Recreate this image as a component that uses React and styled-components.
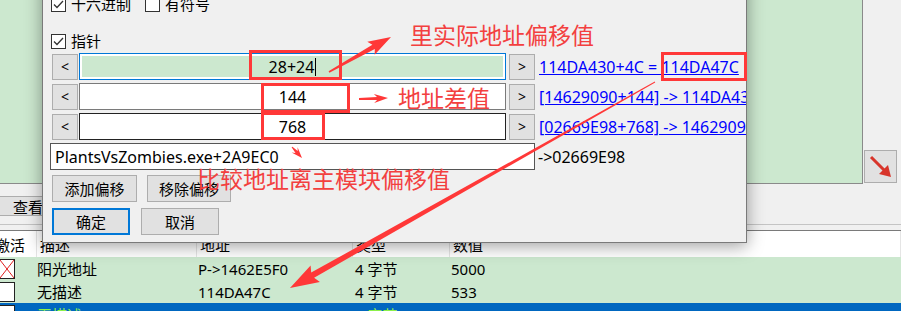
import React from 'react';
import styled, { createGlobalStyle } from 'styled-components';

const GlobalStyle = createGlobalStyle`
  html, body {
    margin: 0;
    padding: 0;
    background: #f0f0f0;
  }
  body {
    font-family: "Noto Sans", "Noto Sans CJK SC", sans-serif;
    font-size: 15px;
    color: #000;
  }
`;

const Screen = styled.div`
  position: relative;
  width: 901px;
  height: 311px;
  overflow: hidden;
  background: #f0f0f0;
`;

/* ---------- main window behind the dialog ---------- */

const TopArea = styled.div`
  display: flex;
  align-items: flex-end;
  gap: 1px;
  height: 184px;
`;

const GreenPane = styled.div`
  width: 862px;
  height: 183px;
  background: #cce8cf;
  border-right: 1px solid #8a8a8a;
  border-bottom: 1px solid #8a8a8a;
`;

const CornerButton = styled.div`
  display: grid;
  place-items: center;
  width: 33px;
  height: 33px;
  margin-bottom: 1px;
  box-sizing: border-box;
  background: #e1e1e1;
  border: 1px solid #adadad;
`;

const Toolbar = styled.div`
  display: flex;
  align-items: flex-start;
  height: 40px;
`;

const ToolButton = styled.div`
  display: flex;
  align-items: center;
  justify-content: center;
  width: 60px;
  height: 20px;
  margin: 12px 0 0 -2px;
  background: #e1e1e1;
  border: 1px solid #adadad;
  box-sizing: border-box;
`;

const Separator = styled.div`
  height: 5px;
  border-top: 1px solid #c4c4c4;
  border-bottom: 1px solid #7a7a7a;
`;

const Grid = styled.div`
  display: grid;
  grid-template-columns: 37px 160px 156px 97px 1fr;
  align-items: center;
  height: ${(p) => p.$h}px;
  background: ${(p) => p.$bg};
  color: ${(p) => p.$fg || '#000'};
  white-space: nowrap;
`;

const HeadCell = styled.div`
  height: 100%;
  display: flex;
  align-items: center;
  padding-left: 3px;
  text-indent: ${(p) => p.$shift || 0}px;
  border-right: 1px solid #e5e5e5;
  overflow: hidden;
`;

const Cell = styled.div`
  padding-left: ${(p) => p.$pad ?? 1}px;
  overflow: hidden;
`;

const RowBox = styled.div`
  position: relative;
  width: 16px;
  height: 20px;
  margin-left: -1px;
  box-sizing: border-box;
  background: #fff;
  border: 1px solid #222;
`;

/* ---------- dialog ---------- */

const Dialog = styled.div`
  position: absolute;
  left: 42px;
  top: -24px;
  width: 705px;
  height: 267px;
  box-sizing: border-box;
  padding: 20px 0 0 8px;
  display: flex;
  flex-direction: column;
  background: #f0f0f0;
  border: 1px solid #7a7a7a;
  box-shadow: 0 3px 16px rgba(0, 0, 0, 0.38);
  overflow: hidden;
`;

const CheckRow = styled.div`
  display: flex;
  align-items: center;
  gap: 14px;
  height: 15px;
  margin-top: ${(p) => p.$top || 0}px;
`;

const CheckItem = styled.label`
  display: flex;
  align-items: center;
  gap: 5px;
  line-height: 15px;
`;

const Box = styled.span`
  display: grid;
  place-items: center;
  width: 15px;
  height: 15px;
  box-sizing: border-box;
  background: #fff;
  border: 1px solid #333;
`;

const OffsetList = styled.div`
  display: flex;
  flex-direction: column;
  gap: 3px;
  margin-top: 4px;
`;

const OffsetRow = styled.div`
  display: flex;
  align-items: center;
  height: 27px;
`;

const StepButton = styled.div`
  display: grid;
  place-items: center;
  flex-shrink: 0;
  width: 26px;
  height: 26px;
  margin-left: ${(p) => p.$left}px;
  box-sizing: border-box;
  background: #e1e1e1;
  border: 1px solid #adadad;
  font-size: 14px;
`;

const OffsetInput = styled.div`
  flex-shrink: 0;
  width: 427px;
  height: 27px;
  margin-left: 1px;
  box-sizing: border-box;
  padding: 2px;
  background: #fff;
  border: 1px solid ${(p) => p.$border};
`;

const InputFill = styled.div`
  display: flex;
  align-items: center;
  justify-content: center;
  height: 100%;
  font-size: 16px;
  background: ${(p) => (p.$active ? '#cce8cf' : '#fff')};
`;

const Caret = styled.span`
  width: 1px;
  height: 18px;
  margin-left: 1px;
  background: #000;
`;

const AddressLink = styled.span`
  flex-shrink: 0;
  margin-left: 4px;
  font-size: 16px;
  color: #0000ff;
  text-decoration: underline;
  white-space: nowrap;
`;

const BaseRow = styled.div`
  display: flex;
  align-items: center;
  height: 27px;
  margin-top: 3px;
  font-size: 16px;
`;

const BaseInput = styled.div`
  display: flex;
  align-items: center;
  flex-shrink: 0;
  width: 485px;
  height: 27px;
  margin-left: -1px;
  padding-left: 4px;
  box-sizing: border-box;
  background: #fff;
  border: 1px solid #555;
`;

const BaseResult = styled.span`
  margin-left: 3px;
  white-space: nowrap;
`;

const ButtonRow = styled.div`
  display: flex;
  gap: ${(p) => p.$gap}px;
  margin: ${(p) => p.$top}px 0 0 1px;
`;

const DialogButton = styled.div`
  display: flex;
  align-items: center;
  justify-content: center;
  width: ${(p) => p.$w}px;
  height: 27px;
  box-sizing: border-box;
  background: #e1e1e1;
  border: ${(p) => (p.$focus ? '2px solid #0078d7' : '1px solid #adadad')};
`;

/* ---------- red annotations over the screenshot ---------- */

const Overlay = styled.svg`
  position: absolute;
  left: 0;
  top: 0;
  pointer-events: none;
`;

const Note = styled.span`
  position: absolute;
  left: ${(p) => p.$x}px;
  top: ${(p) => p.$y}px;
  font-family: "Noto Sans CJK SC", sans-serif;
  font-size: 23px;
  line-height: 1;
  color: #f3403f;
  white-space: nowrap;
`;

const RED = '#ff3838';

const taper = (x0, y0, x1, y1, w0, w1, len, head) => {
  const dx = x1 - x0;
  const dy = y1 - y0;
  const d = Math.hypot(dx, dy);
  const ux = dx / d;
  const uy = dy / d;
  const nx = -uy;
  const ny = ux;
  const ex = x1 - ux * len;
  const ey = y1 - uy * len;
  const bx = ex - ux * 3;
  const by = ey - uy * 3;
  const p = (x, y, k) => `${(x + nx * k).toFixed(1)},${(y + ny * k).toFixed(1)}`;
  return [
    p(x0, y0, w0 / 2),
    p(ex, ey, w1 / 2),
    p(bx, by, head / 2),
    `${x1},${y1}`,
    p(bx, by, -head / 2),
    p(ex, ey, -w1 / 2),
    p(x0, y0, -w0 / 2),
  ].join(' ');
};

const boxes = [
  { x: 250.5, y: 51.5, w: 90, h: 27 },
  { x: 262.5, y: 84.5, w: 86, h: 27 },
  { x: 262.5, y: 113.5, w: 61, h: 25 },
  { x: 662.5, y: 53.5, w: 83, h: 26 },
];

const arrows = [
  taper(329, 72, 391, 37, 1.5, 5, 20, 15),
  taper(359, 99, 388, 98, 2, 3, 11, 9),
  taper(655, 82, 290, 288, 1, 6, 26, 19),
  taper(292, 147, 302, 158, 1, 3, 8, 8),
];

const offsets = [
  { value: '28+24', link: '114DA430+4C = 114DA47C', border: '#0078d7', active: true },
  { value: '144', link: '[14629090+144] -> 114DA430', border: '#7a7a7a' },
  { value: '768', link: '[02669E98+768] -> 14629090', border: '#222' },
];

const rows = [
  { desc: '阳光地址', addr: 'P->1462E5F0', type: '4 字节', value: '5000', crossed: true },
  { desc: '无描述', addr: '114DA47C', type: '4 字节', value: '533' },
];

const Check = () => (
  <svg width="13" height="13" viewBox="0 0 13 13">
    <path d="M2 6.5 L5 9.5 L11 3" fill="none" stroke="#333" strokeWidth="1.3" />
  </svg>
);

const CheckBox = ({ checked, label }) => (
  <CheckItem>
    <Box>{checked && <Check />}</Box>
    {label}
  </CheckItem>
);

const Cross = () => (
  <svg width="14" height="18" viewBox="0 0 14 18" style={{ position: 'absolute', left: 0, top: 0 }}>
    <path d="M0 0 L14 18 M14 0 L0 18" stroke="#e02020" strokeWidth="1" />
  </svg>
);

export default function App() {
  return (
    <Screen>
      <GlobalStyle />

      <TopArea>
        <GreenPane />
        <CornerButton>
          <svg width="31" height="31" viewBox="0 0 31 31">
            <path d="M6 6 L20 20" stroke="#d8352b" strokeWidth="3" />
            <polygon points="26,26 14,23 23,14" fill="#d8352b" />
          </svg>
        </CornerButton>
      </TopArea>

      <Toolbar>
        <ToolButton>查看</ToolButton>
      </Toolbar>
      <Separator />

      <Grid $h={26} $bg="#fff">
        <HeadCell $shift={-8}>激活</HeadCell>
        <HeadCell>描述</HeadCell>
        <HeadCell>地址</HeadCell>
        <HeadCell>类型</HeadCell>
        <HeadCell>数值</HeadCell>
      </Grid>
      {rows.map((r) => (
        <Grid key={r.desc + r.addr} $h={23} $bg="#cce8cf">
          <RowBox>{r.crossed && <Cross />}</RowBox>
          <Cell $pad={0}>{r.desc}</Cell>
          <Cell>{r.addr}</Cell>
          <Cell $pad={2}>{r.type}</Cell>
          <Cell>{r.value}</Cell>
        </Grid>
      ))}
      <Grid $h={23} $bg="#0067c0" $fg="#8cf04a">
        <RowBox />
        <Cell $pad={0}>无描述</Cell>
        <Cell />
        <Cell $pad={2}>4 字节</Cell>
        <Cell />
      </Grid>

      <Dialog>
        <CheckRow>
          <CheckBox checked label="十六进制" />
          <CheckBox label="有符号" />
        </CheckRow>
        <CheckRow $top={22}>
          <CheckBox checked label="指针" />
        </CheckRow>

        <OffsetList>
          {offsets.map((o) => (
            <OffsetRow key={o.value}>
              <StepButton $left={1}>&lt;</StepButton>
              <OffsetInput $border={o.border}>
                <InputFill $active={o.active}>
                  {o.value}
                  {o.active && <Caret />}
                </InputFill>
              </OffsetInput>
              <StepButton $left={3}>&gt;</StepButton>
              <AddressLink>{o.link}</AddressLink>
            </OffsetRow>
          ))}
        </OffsetList>

        <BaseRow>
          <BaseInput>PlantsVsZombies.exe+2A9EC0</BaseInput>
          <BaseResult>-&gt;02669E98</BaseResult>
        </BaseRow>

        <ButtonRow $gap={10} $top={5}>
          <DialogButton $w={85}>添加偏移</DialogButton>
          <DialogButton $w={84}>移除偏移</DialogButton>
        </ButtonRow>
        <ButtonRow $gap={11} $top={6}>
          <DialogButton $w={78} $focus>确定</DialogButton>
          <DialogButton $w={78}>取消</DialogButton>
        </ButtonRow>
      </Dialog>

      <Overlay width="901" height="311" viewBox="0 0 901 311">
        {boxes.map((b) => (
          <rect key={b.x + '-' + b.y} x={b.x} y={b.y} width={b.w} height={b.h} fill="none" stroke={RED} strokeWidth="3" />
        ))}
        {arrows.map((pts, i) => (
          <polygon key={i} points={pts} fill={RED} />
        ))}
      </Overlay>
      <Note $x={410} $y={23}>里实际地址偏移值</Note>
      <Note $x={398} $y={86}>地址差值</Note>
      <Note $x={197} $y={167}>比较地址离主模块偏移值</Note>
    </Screen>
  );
}
